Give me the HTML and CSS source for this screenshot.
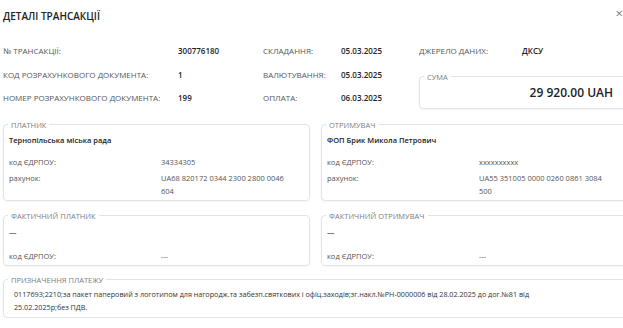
FILE: index.html
```html
<!DOCTYPE html>
<html lang="uk">
<head>
    <meta charset="UTF-8">
    <meta name="viewport" content="width=device-width, initial-scale=1.0">
    <title>Деталі трансакції</title>
    <link rel="stylesheet" href="styles.css">
</head>
<body>
    <div class="dialog">
        <div class="dialog-head">
            <h2 class="dialog-title">ДЕТАЛІ ТРАНСАКЦІЇ</h2>
            <span class="close">×</span>
        </div>

        <div class="summary">
            <span class="label">№ ТРАНСАКЦІЇ:</span>
            <span class="value">300776180</span>
            <span class="label">СКЛАДАННЯ:</span>
            <span class="value">05.03.2025</span>
            <span class="label">ДЖЕРЕЛО ДАНИХ:</span>
            <span class="value">ДКСУ</span>

            <span class="label">КОД РОЗРАХУНКОВОГО ДОКУМЕНТА:</span>
            <span class="value">1</span>
            <span class="label">ВАЛЮТУВАННЯ:</span>
            <span class="value">05.03.2025</span>
            <fieldset class="box sum">
                <legend>СУМА</legend>
                <div class="amount">29 920.00 UAH</div>
            </fieldset>

            <span class="label">НОМЕР РОЗРАХУНКОВОГО ДОКУМЕНТА:</span>
            <span class="value">199</span>
            <span class="label">ОПЛАТА:</span>
            <span class="value">06.03.2025</span>
        </div>

        <div class="parties">
            <fieldset class="box">
                <legend>ПЛАТНИК</legend>
                <div class="name">Тернопільська міська рада</div>
                <div class="kv">
                    <span>код ЄДРПОУ:</span><span>34334305</span>
                    <span>рахунок:</span><span>UA68 820172 0344 2300 2800 0046 604</span>
                </div>
            </fieldset>
            <fieldset class="box">
                <legend>ОТРИМУВАЧ</legend>
                <div class="name">ФОП Брик Микола Петрович</div>
                <div class="kv">
                    <span>код ЄДРПОУ:</span><span>xxxxxxxxxx</span>
                    <span>рахунок:</span><span>UA55 351005 0000 0260 0861 3084 500</span>
                </div>
            </fieldset>
            <fieldset class="box">
                <legend>ФАКТИЧНИЙ ПЛАТНИК</legend>
                <div class="name dash">—</div>
                <div class="kv">
                    <span>код ЄДРПОУ:</span><span>---</span>
                </div>
            </fieldset>
            <fieldset class="box">
                <legend>ФАКТИЧНИЙ ОТРИМУВАЧ</legend>
                <div class="name dash">—</div>
                <div class="kv">
                    <span>код ЄДРПОУ:</span><span>---</span>
                </div>
            </fieldset>
        </div>

        <fieldset class="box purpose">
            <legend>ПРИЗНАЧЕННЯ ПЛАТЕЖУ</legend>
            <div class="purpose-text">0117693;2210;за пакет паперовий з логотипом для нагородж.та забезп.святкових і офіц.заходів;зг.накл.№РН-0000006 від 28.02.2025 до дог.№81 від<br>25.02.2025р;без ПДВ.</div>
        </fieldset>
    </div>
</body>
</html>
```

FILE: styles.css
```css
body {
    margin: 0;
    font-family: "Open Sans", "Liberation Sans", sans-serif;
    color: #444;
    background-color: #fff;
    overflow: hidden;
}
.dialog {
    width: 625px;
    padding: 9px 0 0 3px;
}
.dialog-head {
    display: flex;
    justify-content: space-between;
    align-items: flex-start;
}
.dialog-title {
    margin: 0;
    font-size: 10px;
    font-weight: 600;
    line-height: 14px;
    color: #222;
}
.close {
    margin-right: 5px;
    font-size: 13px;
    line-height: 8px;
    color: #777;
}
.summary {
    display: grid;
    grid-template-columns: 175px 85px 78px 78px 103px 1fr;
    grid-auto-rows: 23.5px;
    align-items: center;
    margin-top: 16px;
    font-size: 8px;
}
.label {
    color: #555;
}
.value {
    font-weight: 600;
    color: #222;
}
.box {
    margin: 0;
    min-width: 0;
    padding: 0 6px 2px 5px;
    border: 1px solid #e0e4e9;
    border-radius: 4px;
    box-shadow: 0 1px 2px rgba(0,0,0,0.04);
}
.box legend {
    margin-left: -1px;
    padding: 0 3px;
    font-size: 7.5px;
    line-height: 10px;
    color: #7d7d7d;
}
.sum {
    grid-column: 5 / 7;
    grid-row: 2 / 4;
    align-self: end;
    margin-bottom: 1px;
    padding-bottom: 0;
}
.amount {
    padding: 0 8px 4px 0;
    font-size: 12px;
    font-weight: 600;
    line-height: 22px;
    text-align: right;
    color: #222;
}
.parties {
    display: grid;
    grid-template-columns: 1fr 1fr;
    column-gap: 11px;
    row-gap: 10px;
    margin-top: 10px;
    font-size: 7.5px;
}
.name {
    margin: 4px 0 9px;
    font-weight: 600;
    line-height: 13px;
    color: #222;
}
.name.dash {
    margin: 5px 0 11px;
    font-weight: 400;
}
.kv {
    display: grid;
    grid-template-columns: 152px 128px;
    row-gap: 3px;
    line-height: 13px;
    color: #555;
}
.purpose {
    margin-top: 9px;
    padding-bottom: 3px;
}
.purpose-text {
    margin-top: 3px;
    padding-left: 5px;
    font-size: 7.2px;
    line-height: 13px;
    color: #333;
}
```
